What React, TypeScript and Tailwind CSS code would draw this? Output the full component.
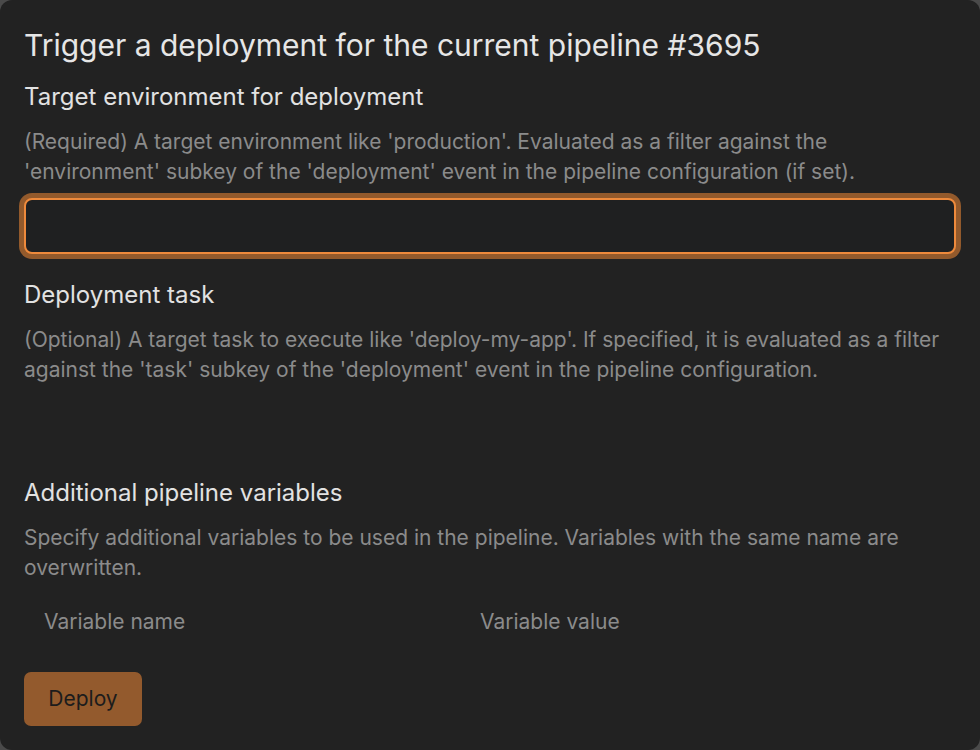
export default function App() {
  return (
    <div className="h-[750px] w-[980px] bg-[#4a4a4a]" style={{ fontFamily: 'Inter, "Noto Sans", sans-serif' }}>
      <div className="flex h-full w-full flex-col rounded-[12px] bg-[#222222] px-6 pt-[27px]">
        <h1 className="text-[30px] leading-[36px] text-[#e6e6e6]">
          Trigger a deployment for the current pipeline #3695
        </h1>

        <label className="mt-[19px] text-[24px] leading-[30px] text-[#e2e2e2]">
          Target environment for deployment
        </label>
        <p className="mt-[15px] text-[21px] leading-[30px] text-[#8b8b8b]">
          (Required) A target environment like 'production'. Evaluated as a filter against the 'environment' subkey of
          the 'deployment' event in the pipeline configuration (if set).
        </p>
        <input
          className="mt-[11px] h-[56px] w-full shrink-0 rounded-[8px] border-2 border-[#ee8a3c] bg-[#1f2021] px-4 text-[20px] text-[#e2e2e2] shadow-[0_0_0_5px_#935a2c] outline-none"
          type="text"
        />

        <label className="mt-[26px] text-[24px] leading-[30px] text-[#e2e2e2]">Deployment task</label>
        <p className="mt-[15px] text-[21px] leading-[30px] text-[#8b8b8b]">
          (Optional) A target task to execute like 'deploy-my-app'. If specified, it is evaluated as a filter against
          the 'task' subkey of the 'deployment' event in the pipeline configuration.
        </p>

        <label className="mt-[93px] text-[24px] leading-[30px] text-[#e2e2e2]">Additional pipeline variables</label>
        <p className="mt-[15px] text-[21px] leading-[30px] text-[#8b8b8b]">
          Specify additional variables to be used in the pipeline. Variables with the same name are overwritten.
        </p>

        <div className="mt-[24px] grid grid-cols-[436px_1fr] px-5 text-[21px] leading-[30px] text-[#8b8b8b]">
          <span>Variable name</span>
          <span>Variable value</span>
        </div>

        <div className="mt-[35px]">
          <button className="h-[54px] w-[118px] rounded-[7px] bg-[#935a2d] text-[21px] text-[#1c1c1c]">Deploy</button>
        </div>
      </div>
    </div>
  );
}
